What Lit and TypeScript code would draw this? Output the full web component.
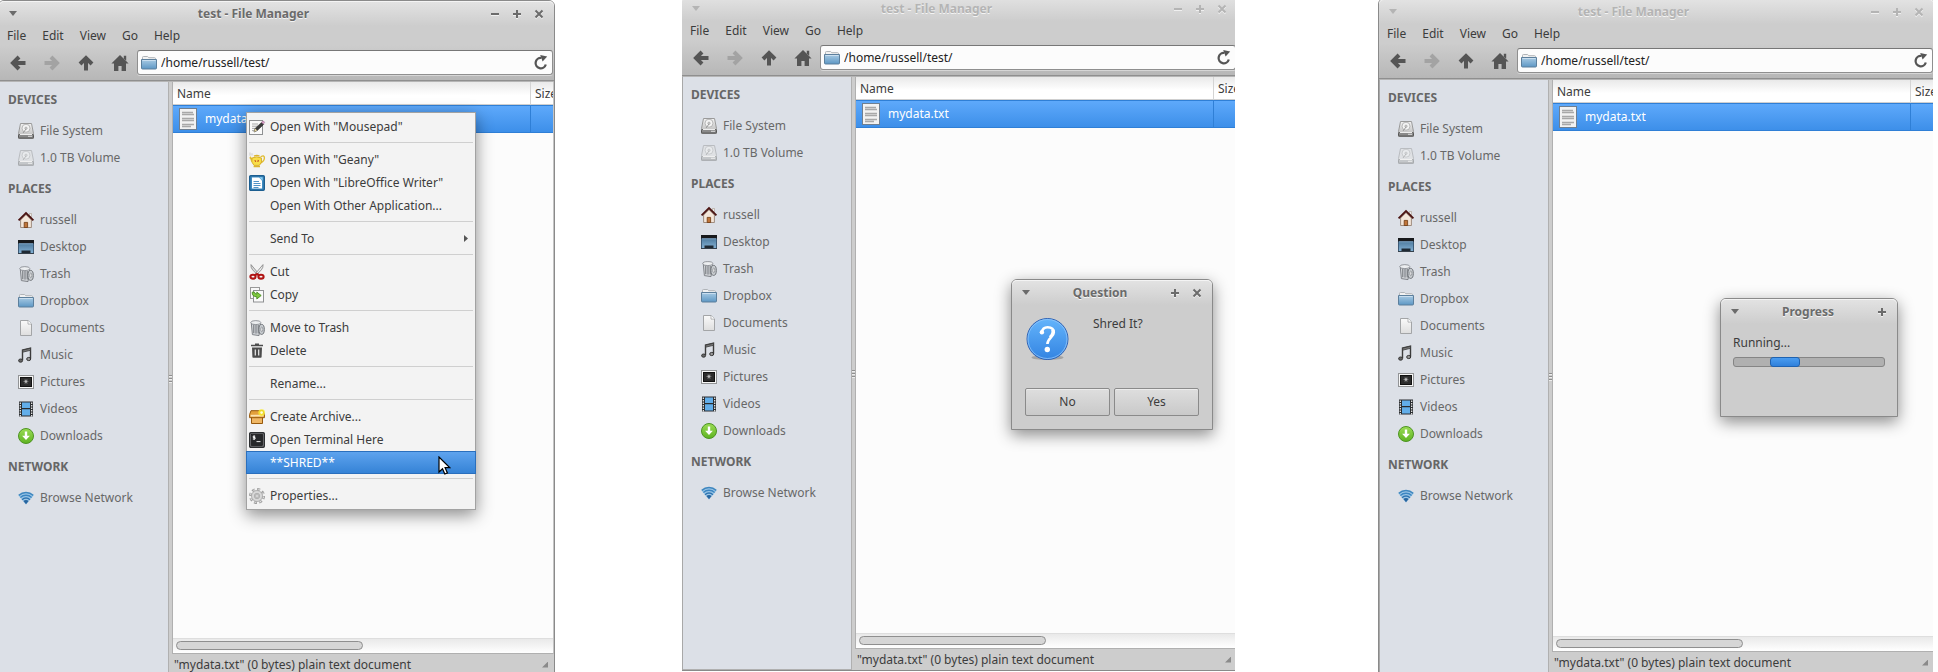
import { LitElement, html, svg, css, nothing, TemplateResult } from "lit";
import { customElement, property } from "lit/decorators.js";
import { classMap } from "lit/directives/class-map.js";

const glyphs: Record<string, TemplateResult> = {
  drive: svg`
    <path d="M2.5 .5h11l2 10v5H.5v-5z" fill="url(#metal)" stroke="#9a9a9a"/>
    <rect x=".5" y="11.5" width="15" height="3.6" rx="1" fill="#8a8a8a" stroke="#555"/>
    <path d="M2 11.5h12" stroke="#eee"/>
    <circle cx="8" cy="5.2" r="4" fill="#f4f4f4" stroke="#aaa" stroke-width=".8"/>
    <circle cx="8" cy="5.2" r="1.2" fill="#ccc" stroke="#999" stroke-width=".5"/>
    <path d="M5 10l3-4" stroke="#999"/><path d="M10 13.3h4" stroke="#ddd"/>`,
  volume: svg`
    <path d="M2.5 .5h11l2 10v5H.5v-5z" fill="#dfe1e4" stroke="#b9bcc0"/>
    <rect x=".5" y="11.5" width="15" height="3.6" rx="1" fill="#c4c7ca" stroke="#a5a8ab"/>
    <path d="M2 11.5h12" stroke="#f0f0f0"/>
    <circle cx="8" cy="5.2" r="4" fill="#e9ebed" stroke="#c2c4c7" stroke-width=".8"/>
    <circle cx="8" cy="5.2" r="1.2" fill="#d6d8da" stroke="#b6b8ba" stroke-width=".5"/>
    <path d="M5 10l3-4" stroke="#b6b8ba"/><path d="M10 13.3h4" stroke="#ededed"/>`,
  home: svg`
    <path d="M2.6 8v7.5h10.8V8L8 2.6z" fill="#f3e6da" stroke="#8d7767" stroke-width=".8"/>
    <path d="M11.5 1.5h2v4l-2-2z" fill="#eee" stroke="#a89a8c" stroke-width=".6"/>
    <path d="M.6 8.4L8 1l7.4 7.4" fill="none" stroke="#4b1412" stroke-width="1.9"/>
    <path d="M6.2 15.5V10.4h3.4v5.1z" fill="#c0753a" stroke="#6e3a12" stroke-width=".8"/>`,
  desktop: svg`
    <rect x=".5" y="1.5" width="15" height="13" fill="url(#screen)" stroke="#3d5a75"/>
    <path d="M0 1h16v3.4H0z" fill="#17191c"/><path d="M1 4.8h14" stroke="#8fb4d3" stroke-width=".8"/>
    <path d="M3.500 11.500h9v2.500h-9z" fill="#1f2933"/><path d="M0 14.500h16" stroke="#36404a"/>`,
  trash: svg`
    <path d="M2.2 2.2L3.4 14.600l6.600 1 1.6-12z" fill="#d3d6da" stroke="#777b80" stroke-width=".9"/>
    <path d="M4.8 4.4v8.8M7 4.6v9M9.200 5v8.4" stroke="#6d7176"/>
    <ellipse cx="6.8" cy="2.6" rx="5" ry="2" fill="#eceef0" stroke="#80848a" stroke-width=".8"/>
    <ellipse cx="12.6" cy="9.4" rx="2.7" ry="5" fill="#caced2" stroke="#6f7378"/>
    <ellipse cx="12.8" cy="9.4" rx="1" ry="2.4" fill="#f3f3f3" stroke="#7d8186" stroke-width=".7"/>`,
  folder: svg`
    <path d="M1.500 8V2.4Q1.500 1.500 2.4 1.500h4.2l1.2 1.2h5.8q.9 0 .9.9V8z" fill="#f2f2f2" stroke="#b0b4b8"/>
    <path d="M.5 4.500h15v8.6q0 .9-.9.9H1.4q-.9 0-.9-.9z" fill="url(#blue)" stroke="#5c7f9c"/>
    <path d="M1.4 5.500h13.2" stroke="#d3e5f2" stroke-width=".8"/>`,
  document: svg`
    <path d="M2.500 .5h7.6l3.4 3.4v11.6h-11z" fill="url(#paper)" stroke="#a3a5a7"/>
    <path d="M10 .6v3.500h3.4" fill="#fff" stroke="#a3a5a7" stroke-width=".8"/>`,
  music: svg`
    <path d="M4.500 13V3l8-1.8v10.6" fill="none" stroke="#3c3c3c" stroke-width="1.4"/>
    <path d="M4.500 3.2l8-1.900v2l-8 1.9z" fill="#777" stroke="#3c3c3c" stroke-width=".8"/>
    <ellipse cx="2.6" cy="13.600" rx="2" ry="1.6" fill="#666" stroke="#333"/>
    <ellipse cx="10.7" cy="12" rx="2" ry="1.6" fill="#999" stroke="#333"/>`,
  pictures: svg`
    <rect x=".5" y="1.500" width="15" height="13" fill="#f6f6f6" stroke="#929496"/>
    <rect x="2.500" y="3.500" width="11" height="9" fill="#2c2c2c" stroke="#111"/>
    <path d="M8 5v5.200M5.400 7.500h5M6.200 5.800l3.600 3.600M9.800 5.800l-3.600 3.600" stroke="#888" stroke-width=".7"/>
    <circle cx="7.900" cy="7.500" r="1.200" fill="#bbb"/>`,
  videos: svg`
    <path d="M1 .5h14v15H1z" fill="#2a2d30"/>
    <path d="M2.300 1.500v14M13.700 1.500v14" stroke="#f2f2f2" stroke-width="1.200" stroke-dasharray="1.400 1.100"/>
    <path d="M4 1.500h8V7H4zM4 8.200h8v6.300H4z" fill="#62aeea"/>`,
  downloads: svg`
    <circle cx="8" cy="8" r="7.500" fill="url(#green)" stroke="#4d9423"/>
    <path d="M6.800 3.600h2.400v4.200h2.700L8 12 4.100 7.800h2.700z" fill="#fff"/>`,
  network: svg`
    <path d="M8 14.500L.3 5.400Q8-1 15.700 5.400z" fill="#9cc6e6"/>
    <path d="M8 14.200l-2.600-3.100a3.400 3.400 0 0 1 5.200 0z" fill="#2866a0"/>
    <path d="M4.100 9.700a5.300 5.300 0 0 1 7.800 0" fill="none" stroke="#2f75b2" stroke-width="1.500"/>
    <path d="M2.400 7.600a8 8 0 0 1 11.200 0" fill="none" stroke="#3c86c2" stroke-width="1.400"/>
    <path d="M.8 5.400a10.600 10.600 0 0 1 14.400 0" fill="none" stroke="#3f87bf" stroke-width="1.500"/>`,
  mousepad: svg`
    <rect x=".5" y="1.500" width="13" height="14" fill="#fafafa" stroke="#8e9092"/>
    <path d="M3 5h6M3 7.200h6M3 9.400h4M3 11.600h3" stroke="#a8a8a8"/>
    <path d="M5 13l1.200-3.600 6.400-6 2 2-6.400 6.200z" fill="#3b3b3b" stroke="#222" stroke-width=".6"/>
    <path d="M5 13l1.200-3.600 1.900 2.200z" fill="#ead9a0"/>
    <path d="M12.300 3.300l1.400-1.200q1.200-.2 2 1.200l-1.300 1.800z" fill="#d9a3c8" stroke="#95648a" stroke-width=".5"/>`,
  geany: svg`
    <path d="M1 .4v3.400M3 1.200v2.400" stroke="#d4d4d4" stroke-width="1.200"/>
    <path d="M11.600 5q3.900-2.600 3.800 1-.2 3.400-3.800 5" fill="none" stroke="#e0bd33" stroke-width="1.400"/>
    <path d="M3.200 9.600Q2.400 6 .8 5.200" fill="none" stroke="#e0bb30" stroke-width="2"/>
    <path d="M3 6q4.600-2.400 9.400 0 1.200 4.400-2 7.400H5Q1.800 10.400 3 6z" fill="#f8de48" stroke="#cfa320" stroke-width=".8"/>
    <path d="M5 4.200q2.800-1.800 5.600 0M4.600 14.600h6.400" fill="none" stroke="#dcb42c" stroke-width="1.300"/>
    <path d="M5.800 8.200l1 1.600M9.400 8l-.6 1.800" stroke="#c0401c" stroke-width="1.100"/>`,
  writer: svg`
    <rect x=".7" y=".7" width="14.600" height="14.600" rx="1" fill="#3f8cc2" stroke="#1c5e90" stroke-width="1.400"/>
    <path d="M3 2.600h7l3 3V13.400H3z" fill="#fff"/><path d="M10.200 2.200h3.400v3.400z" fill="#8bd0f5"/>
    <path d="M4.500 6.500h5.500M4.500 8.500h7M4.500 10.500h7M4.500 12.500h5" stroke="#3d88bf" stroke-width=".9"/>`,
  cut: svg`
    <path d="M2 .6q-.4 2.800 1.600 5.200l4.800 5 1-1.400z" fill="#dcdcdc" stroke="#808080" stroke-width=".8"/>
    <path d="M14 .6q.4 2.800-1.600 5.200l-4.800 5-1-1.400z" fill="#ececec" stroke="#808080" stroke-width=".8"/>
    <g fill="none" stroke="#b01414" stroke-width="2.100"><ellipse cx="4" cy="12.700" rx="2.600" ry="1.900"/>
    <ellipse cx="12" cy="12.700" rx="2.600" ry="1.900"/><path d="M6 11.400l2-1.400 2 1.400"/></g>`,
  copy: svg`
    <rect x="1.500" y=".5" width="9" height="11" fill="#f8f8f8" stroke="#999"/>
    <rect x="4.500" y="3.500" width="10" height="11.500" fill="#fafafa" stroke="#8f9193"/>
    <path d="M3.200 5.200q-.4 4.400 4.600 4.600V12l4.400-3.500-4.400-3.400v2q-2.200 0-2.400-2z" fill="#7ec83f" stroke="#3f8418" stroke-width=".8"/>`,
  del: svg`
    <path d="M2 2.500h12M6 1.300h4" stroke="#4c4c4c" stroke-width="1.700"/>
    <path d="M3 4.500h10l-.4 9.400q0 .8-.8.800H4.200q-.8 0-.8-.800z" fill="#4c4c4c"/>
    <path d="M6.300 6.500v6M9.700 6.500v6" stroke="#eee" stroke-width="1.200"/>`,
  archive: svg`
    <path d="M2.500 7.500h11v7h-11z" fill="#efb765" stroke="#97590c"/>
    <path d="M.6 5.500L2 1.700h12l1.400 3.800v3.200H.6z" fill="#e3a13c" stroke="#97590c"/>
    <path d="M1.600 5.800h13v1.800h-13z" fill="#fbe3b2"/>
    <circle cx="12.600" cy="3.600" r="3.300" fill="#f7ea2b" opacity=".85"/><circle cx="12.600" cy="3.600" r="1.300" fill="#fffde0"/>`,
  terminal: svg`
    <rect x=".7" y=".7" width="14.600" height="14.600" rx="1" fill="#8b8d90" stroke="#2c2e30" stroke-width="1.400"/>
    <rect x="2.400" y="2.400" width="11.200" height="11.200" fill="#26282a" stroke="#111" stroke-width=".6"/>
    <path d="M6.200 4.200H4.200v1.300h1.900v1.500H3.800M5.100 3.400v4.500M7.500 9.600h4" fill="none" stroke="#fff" stroke-width=".9"/>`,
  gear: svg`
    <circle cx="8" cy="8" r="6.600" fill="none" stroke="#9c9c9c" stroke-width="2.800" stroke-dasharray="2.900 2.280"/>
    <circle cx="8" cy="8" r="6.500" fill="none" stroke="#dedede" stroke-width="1.300" stroke-dasharray="1.700 3.400" stroke-dashoffset="-.6"/>
    <circle cx="8" cy="8" r="5.500" fill="#d8d8d8" stroke="#a5a5a5" stroke-width=".8"/>
    <circle cx="8" cy="8" r="2.700" fill="#c6c6c6" stroke="#a8a8a8" stroke-width=".8"/>
    <circle cx="8" cy="8" r="1.300" fill="#f3f3f3" stroke="#a0a0a0" stroke-width=".6"/>`,
  back: svg`<path d="M9 2L3 8l6 6M3.500 8h12" fill="none" stroke="#555" stroke-width="4"/>`,
  forward: svg`<path d="M7 2l6 6-6 6M12.500 8H.5" fill="none" stroke="#a3a3a3" stroke-width="4"/>`,
  up: svg`<path d="M2 9l6-6 6 6M8 3.500v12" fill="none" stroke="#555" stroke-width="4"/>`,
  house: svg`<path d="M8 0l8.600 8.600H14V16H9.600v-5H6.400v5H2V8.600H-.6z" fill="#555"/><path d="M11.800.8h2.400v5l-2.400-2z" fill="#555"/>`,
  reload: svg`<path d="M12.800 9.500a5.200 5.200 0 1 1-4.300-6.600" fill="none" stroke="#555" stroke-width="2.300"/>
    <path d="M7.200 0l7 1.600-4.600 5z" fill="#555"/>`,
};

const icon = (name: string, size = 16) => html`<svg class="icon" width=${size} height=${size} viewBox="0 0 16 16" overflow="visible" aria-hidden="true">
  <defs>
    <linearGradient id="metal" x2="0" y2="1"><stop stop-color="#f2f2f2"/><stop offset="1" stop-color="#b5b5b5"/></linearGradient>
    <linearGradient id="screen" x2="0" y2="1"><stop stop-color="#3f6a8d"/><stop offset="1" stop-color="#85b3d6"/></linearGradient>
    <linearGradient id="blue" x2="0" y2="1"><stop stop-color="#a9cbe4"/><stop offset="1" stop-color="#5d97c4"/></linearGradient>
    <linearGradient id="paper" x2="0" y2="1"><stop stop-color="#fafafa"/><stop offset="1" stop-color="#dedede"/></linearGradient>
    <linearGradient id="green" x2="0" y2="1"><stop stop-color="#9bdc55"/><stop offset="1" stop-color="#5eb321"/></linearGradient>
  </defs>${glyphs[name] ?? nothing}</svg>`;

const base = css`
  :host, * { box-sizing: border-box; }
  button { font: inherit; color: inherit; background: none; border: 0; padding: 0; text-align: left; }
  a { color: inherit; text-decoration: none; }
  .icon { display: block; flex: none; }
`;

const controlPaths: Record<string, string> = {
  Minimise: "M1 5h8",
  Maximise: "M1 5h8M5 1v8",
  Close: "M1.500 1.500l7 7M8.500 1.500l-7 7",
};

@customElement("title-bar")
export class TitleBar extends LitElement {
  @property() label = "";
  @property({ type: Array }) controls: string[] = [];
  @property({ type: Boolean, reflect: true }) inactive = false;
  static styles = [base, css`
    :host { display: flex; align-items: center; height: 25px; padding: 0 10px;
      color: #6b6b6b; background: linear-gradient(#e3e3e3, #cdcdcd); box-shadow: inset 0 1px #f4f4f4; border-radius: 5px 5px 0 0; }
    :host([inactive]) { color: #b4b4b4; }
    .arrow { width: 8px; height: 5px; background: currentColor; clip-path: polygon(0 0, 100% 0, 50% 100%); }
    .title { flex: 1; margin: 0; font-size: 12px; line-height: 16px; font-weight: 700; text-align: center; text-shadow: 0 1px #f4f4f4; }
    .controls { display: flex; gap: 12px; }
    .controls svg { display: block; overflow: visible; }
  `];
  render() {
    return html`<button class="arrow" aria-label="Window menu"></button>
      <h2 class="title">${this.label}</h2>
      <div class="controls">${this.controls.map((name) => html`<button aria-label=${name}>
        <svg width="10" height="10" viewBox="0 0 10 10"><path d=${controlPaths[name]} transform="translate(0 1)" fill="none" stroke="#f0f0f0" stroke-width="2"/>
        <path d=${controlPaths[name]} fill="none" stroke="currentColor" stroke-width="2"/></svg></button>`)}</div>`;
  }
}

const places: [string, [string, string][]][] = [
  ["DEVICES", [["drive", "File System"], ["volume", "1.0 TB Volume"]]],
  ["PLACES", [["home", "russell"], ["desktop", "Desktop"], ["trash", "Trash"], ["folder", "Dropbox"], ["document", "Documents"],
    ["music", "Music"], ["pictures", "Pictures"], ["videos", "Videos"], ["downloads", "Downloads"]]],
  ["NETWORK", [["network", "Browse Network"]]],
];

@customElement("file-window")
export class FileWindow extends LitElement {
  @property({ type: Boolean }) inactive = false;
  static styles = [base, css`
    :host { position: relative; display: flex; flex-direction: column; border: 1px solid #8a8a8a; border-radius: 6px 6px 0 0;
      background: #cdcdcd; color: #3c3c3c; }
    .menubar { display: flex; gap: 16px; padding: 0 8px; height: 19px; line-height: 18px; }
    .toolbar { display: flex; align-items: center; height: 36px; padding: 0 1px 0 2px;
      background: linear-gradient(#cdcdcd, #b7b7b7); border-bottom: 1px solid #8f8f8f; }
    .tool { display: grid; place-items: center; width: 34px; height: 30px; }
    .path { flex: 1; display: flex; align-items: center; gap: 4px; height: 25px; padding: 0 3px; min-width: 0;
      background: #fcfcfc; border: 1px solid #8f8f8f; border-top-color: #777; border-radius: 3px; box-shadow: 0 1px #d6d6d6; }
    .path input { flex: 1; min-width: 0; font: inherit; color: #222; border: 0; padding: 0; background: none; outline: 0; }
    .body { flex: 1; min-height: 0; display: flex; border-top: 1px solid #b5b5b5; border-left: 1px solid #a8a8a8; }
    .side { width: 169px; background: #dce0e7; border-right: 1px solid #b0b0b0; border-bottom: 1px solid #b0b0b0; color: #686868; }
    .heading { margin: 0; padding-left: 8px; font-size: 12px; line-height: 35px; font-weight: 700; color: #666; }
    .place { display: flex; align-items: center; gap: 6px; height: 27px; padding-left: 18px; }
    .split { width: 3px; display: flex; flex-direction: column; justify-content: center; gap: 2px; }
    .split i { height: 1px; background: #8f8f8f; box-shadow: 0 1px #eee; }
    .main { flex: 1; min-width: 0; display: flex; flex-direction: column; }
    .pane { flex: 1; display: flex; flex-direction: column; background: #fcfcfc; border-left: 1px solid #b0b0b0;
      border-bottom: 1px solid #b0b0b0; border-right: 1px solid #c4c4c4; }
    table { width: 100%; table-layout: fixed; border-collapse: separate; border-spacing: 0; }
    th, td { padding: 0 4px; text-align: left; font-weight: 400; white-space: nowrap; overflow: hidden; }
    th { height: 23px; padding-top: 1px; line-height: 20px; background: linear-gradient(#e9e9e9, #fff 60%); border-bottom: 1px solid #cfcfcf; }
    .size { width: 23px; border-left: 1px solid #d4d4d4; }
    td { height: 28px; color: #fff; background: linear-gradient(#5ea9fb, #3d8fe9); border: solid #2f7fd6; border-width: 1px 0; }
    td.size { border-left: 1px solid #2f7fd6; }
    .file { display: flex; align-items: center; gap: 8px; padding-left: 2px; }
    .track { margin-top: auto; height: 15px; padding: 2px 3px; border-top: 1px solid #dedede; background: linear-gradient(#e9e9e9, #fff); }
    .thumb { width: 50%; height: 9px; border: 1px solid #8f8f8f; border-radius: 5px; background: #d6d6d6; }
    .status { display: flex; align-items: center; justify-content: space-between; height: 21px; padding: 0 6px 0 2px; white-space: nowrap; }
    .grip { width: 6px; height: 6px; background: #8a8a8a; clip-path: polygon(100% 0, 100% 100%, 0 100%); }
  `];
  render() {
    return html`
      <title-bar label="test - File Manager" ?inactive=${this.inactive} .controls=${["Minimise", "Maximise", "Close"]}></title-bar>
      <nav class="menubar">${["File", "Edit", "View", "Go", "Help"].map((m) => html`<button>${m}</button>`)}</nav>
      <div class="toolbar">
        ${[["back", "Back"], ["forward", "Forward"], ["up", "Up"], ["house", "Home"]].map(([g, label]) =>
          html`<button class="tool" aria-label=${label} ?disabled=${g === "forward"}>${icon(g)}</button>`)}
        <div class="path">${icon("folder")}<input aria-label="Location" .value=${"/home/russell/test/"}>
          <button aria-label="Reload">${icon("reload")}</button></div>
      </div>
      <div class="body">
        <nav class="side">${places.map(([title, items]) => html`<h3 class="heading">${title}</h3>
          ${items.map(([g, label]) => html`<a class="place" href="#">${icon(g)}${label}</a>`)}`)}</nav>
        <div class="split"><i></i><i></i><i></i></div>
        <div class="main">
          <div class="pane">
            <table>
              <thead><tr><th>Name</th><th class="size">Size</th></tr></thead>
              <tbody><tr><td><div class="file">
                <svg width="18" height="22" viewBox="0 0 18 22" aria-hidden="true"><rect x=".5" y=".5" width="17" height="21" fill="#f2f2f2" stroke="#6f7f90"/>
                  <path d="M3 4.500h11M3 6.500h12M3 10.500h12M3 12.500h12M3 16.500h12M3 18.500h9" stroke="#a8a8a8" stroke-width="1.300"/></svg>
                mydata.txt</div></td><td class="size"></td></tr></tbody>
            </table>
            <div class="track"><div class="thumb"></div></div>
          </div>
          <div class="status">"mydata.txt" (0 bytes) plain text document<span class="grip"></span></div>
        </div>
      </div>
      <slot></slot>`;
  }
}

const menuGroups: [string, string][][] = [
  [["mousepad", 'Open With "Mousepad"']],
  [["geany", 'Open With "Geany"'], ["writer", 'Open With "LibreOffice Writer"'], ["", "Open With Other Application..."]],
  [["", "Send To"]],
  [["cut", "Cut"], ["copy", "Copy"]],
  [["trash", "Move to Trash"], ["del", "Delete"]],
  [["", "Rename..."]],
  [["archive", "Create Archive..."], ["terminal", "Open Terminal Here"], ["", "**SHRED**"]],
  [["gear", "Properties..."]],
];

@customElement("context-menu")
export class ContextMenu extends LitElement {
  static styles = [base, css`
    :host { display: block; width: 230px; padding: 2px 0; background: #f3f3f3; border: 1px solid #a2a2a2; color: #3c3c3c;
      box-shadow: 0 5px 16px rgba(0, 0, 0, 0.45); }
    hr { margin: 4px 2px 5px; border: 0; height: 1px; background: #cfcfcf; }
    .item { position: relative; display: flex; align-items: center; gap: 5px; width: 100%; height: 23px; padding: 0 7px 0 2px; white-space: nowrap; }
    .chosen { width: calc(100% + 2px); margin: 0 -1px; padding: 0 2px; color: #fff; border: 1px solid #2a6fbd; background: linear-gradient(#5ea3ee, #3583d6); }
    .sub { margin-left: auto; width: 4px; height: 7px; background: #555; clip-path: polygon(0 0, 100% 50%, 0 100%); }
    .cursor { position: absolute; right: 24px; top: 4px; z-index: 1; }
  `];
  render() {
    return html`${menuGroups.map((group, i) => html`${i ? html`<hr>` : nothing}${group.map(([g, label]) => html`
      <button class=${classMap({ item: true, chosen: label === "**SHRED**" })}>${icon(g)}${label}
        ${label === "Send To" ? html`<span class="sub"></span>` : nothing}
        ${label === "**SHRED**" ? html`<svg class="cursor" width="13" height="19" viewBox="0 0 13 19" aria-hidden="true">
          <path d="M1 1v15l3.500-3.300 2.300 5.300 2.600-1.100-2.300-5.200h4.800z" fill="#fff" stroke="#000" stroke-width="1.200"/></svg>` : nothing}
      </button>`)}`)}`;
  }
}

const dialog = css`
  :host { display: block; background: #cdcdcd; border: 1px solid #8a8a8a; border-radius: 6px 6px 0 0; color: #3c3c3c;
    box-shadow: 0 5px 16px rgba(0, 0, 0, 0.45); }
`;

@customElement("question-dialog")
export class QuestionDialog extends LitElement {
  static styles = [base, dialog, css`
    :host { width: 202px; }
    .message { display: flex; gap: 24px; padding: 11px 14px 0; height: 83px; }
    .message p { margin: 0; line-height: 16px; }
    .actions { display: grid; grid-template-columns: 1fr 1fr; gap: 4px; padding: 0 13px 13px; }
    .actions button { height: 28px; text-align: center; border: 1px solid #8a8a8a; border-radius: 2px;
      background: linear-gradient(#dedede, #c9c9c9); box-shadow: inset 0 1px #ececec; }
  `];
  render() {
    return html`<title-bar label="Question" .controls=${["Maximise", "Close"]}></title-bar>
      <div class="message">
        <svg width="43" height="44" viewBox="0 0 43 44" aria-hidden="true">
          <defs><linearGradient id="q" x2="0" y2="1"><stop stop-color="#64b4fb"/><stop offset="1" stop-color="#3384e2"/></linearGradient></defs>
          <ellipse cx="21.500" cy="41.500" rx="16" ry="2.500" fill="#000" opacity=".2"/>
          <circle cx="21.500" cy="23" r="20.500" fill="url(#q)" stroke="#2f62b4"/>
          <circle cx="21.500" cy="23" r="19.500" fill="none" stroke="#8fc6fb" stroke-width=".8"/>
          <path d="M15.800 16.300c.6-3.600 2.800-5 5.800-5 3.800 0 6.200 2 6.200 5.200 0 5-6.400 5.400-6.400 11.600" fill="none" stroke="#fff" stroke-width="2.600"/>
          <path d="M26.500 13.500c1.600 3.400-.8 6-2.600 7.800" fill="none" stroke="#fff" stroke-width="3"/>
          <circle cx="15.900" cy="16.300" r="2.200" fill="#fff"/><circle cx="21.300" cy="33.500" r="2.700" fill="#fff"/></svg>
        <p>Shred It?</p>
      </div>
      <div class="actions"><button>No</button><button>Yes</button></div>`;
  }
}

@customElement("progress-dialog")
export class ProgressDialog extends LitElement {
  static styles = [base, dialog, css`
    :host { width: 178px; height: 119px; }
    .content { display: grid; gap: 6px; padding: 10px 12px; }
    label { line-height: 17px; }
    progress { display: block; appearance: none; width: 100%; height: 10px; border: 1px solid #858585; border-radius: 3px; background: #b0b0b0; }
    progress::-webkit-progress-bar { width: 20%; height: 10px; margin: -1px 0 0 36px; border: 1px solid #1f62b0; border-radius: 3px;
      background: linear-gradient(#4a9cf0, #2f80dc); }
  `];
  render() {
    return html`<title-bar label="Progress" .controls=${["Maximise"]}></title-bar>
      <div class="content"><label for="bar">Running...</label><progress id="bar"></progress></div>`;
  }
}

@customElement("app-root")
export class AppRoot extends LitElement {
  static styles = css`
    :host { display: grid; grid-template-columns: 555fr 127fr 553fr 143fr 555fr 5fr; height: 100vh; overflow: hidden; background: #fff;
      font-family: "Noto Sans", "Open Sans", sans-serif; font-size: 12px; line-height: 16px; }
    .view { overflow: hidden; min-width: 0; }
    .first { grid-column: 1; }
    .second { grid-column: 3; }
    .third { grid-column: 5; }
    file-window { height: calc(100vh + 4px); }
    .first file-window { margin-left: -2px; }
    .second file-window { margin: -5px -3px 0 -1px; }
    .third file-window { margin: -2px -2px 0 0; }
    context-menu, question-dialog, progress-dialog { position: absolute; z-index: 1; }
    context-menu { left: 247px; top: 111px; }
    question-dialog { left: 329px; top: 283px; }
    progress-dialog { left: 341px; top: 299px; }
  `;
  render() {
    return html`
      <section class="view first"><file-window><context-menu></context-menu></file-window></section>
      <section class="view second"><file-window inactive><question-dialog></question-dialog></file-window></section>
      <section class="view third"><file-window inactive><progress-dialog></progress-dialog></file-window></section>`;
  }
}
